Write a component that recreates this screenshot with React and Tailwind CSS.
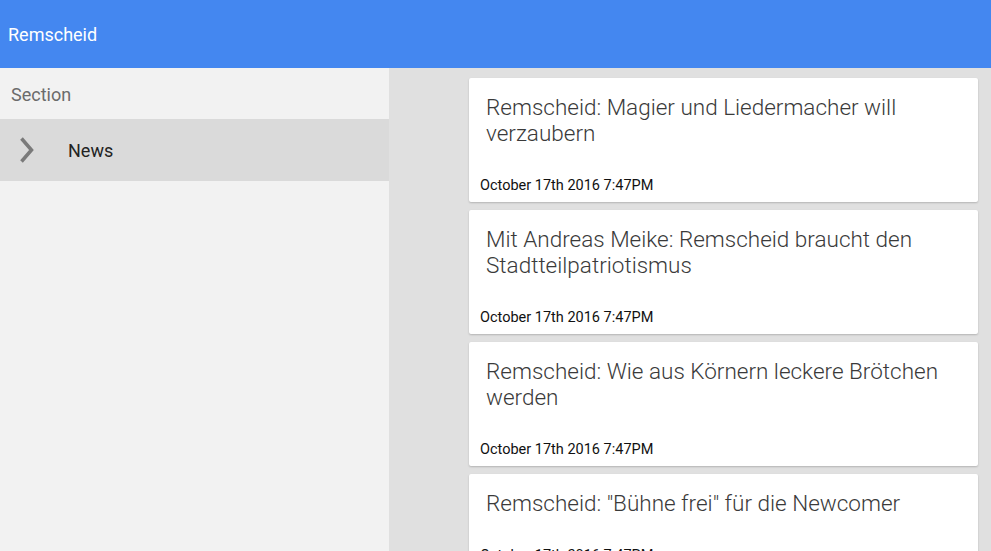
import React from "react";

const items = [
  "Remscheid: Magier und Liedermacher will verzaubern",
  "Mit Andreas Meike: Remscheid braucht den Stadtteilpatriotismus",
  "Remscheid: Wie aus Körnern leckere Brötchen werden",
  'Remscheid: "Bühne frei" für die Newcomer',
];

export default function App() {
  return (
    <div className="w-[991px] h-[551px] overflow-hidden flex flex-col font-['Roboto',sans-serif]">
      <div className="h-[68px] shrink-0 bg-[#4487f0] flex items-center px-[8px] text-white text-[18px]">
        Remscheid
      </div>
      <div className="flex flex-1 min-h-0">
        <div className="w-[389px] shrink-0 bg-[#f2f2f2] flex flex-col">
          <div className="h-[51px] flex items-center pt-[2px] px-[11px] text-[18px] text-[#6b6b6b]">Section</div>
          <div className="h-[62px] bg-[#dadada] flex items-center">
            <svg width="50" height="62" viewBox="0 0 50 62" className="shrink-0">
              <path d="M21.5 19.5 L31.5 31 L21.5 42.5" fill="none" stroke="#7a7a7a" strokeWidth="3.5" />
            </svg>
            <span className="ml-[18px] text-[18px] text-[#222]">News</span>
          </div>
        </div>
        <div className="flex-1 bg-[#e0e0e0] pt-[10px] pl-[80px] pr-[13px] flex flex-col gap-[8px] overflow-hidden">
          {items.map((t, i) => (
            <div key={i} className="bg-white rounded-[2px] shadow-[0_1px_2px_rgba(0,0,0,0.2)] shrink-0">
              <div className="pt-[16px] px-[17px] text-[22.5px] leading-[26px] font-light text-[#3a3a3a]">{t}</div>
              <div className="mt-[32px] pb-[8px] px-[11px] text-[14.5px] leading-[16px] text-[#111]">
                October 17th 2016 7:47PM
              </div>
            </div>
          ))}
        </div>
      </div>
    </div>
  );
}
